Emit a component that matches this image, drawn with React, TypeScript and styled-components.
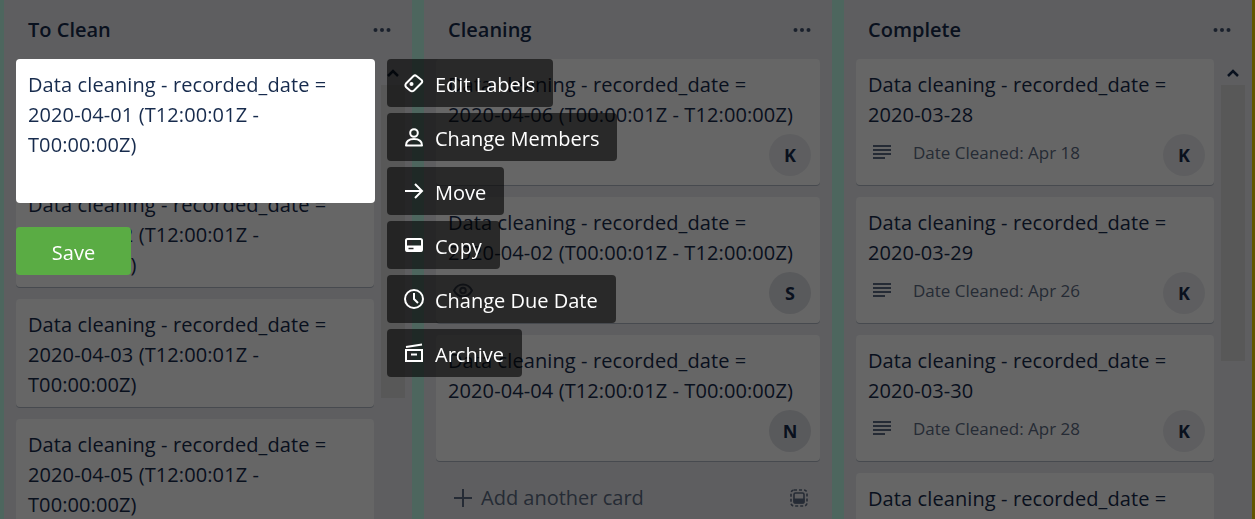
import React from "react";
import styled, { createGlobalStyle } from "styled-components";

const GlobalStyle = createGlobalStyle`
  html, body {
    margin: 0;
    height: 100%;
    overflow: hidden;
    background: #c0ffea;
  }
  body {
    font-family: "Open Sans", "Noto Sans", sans-serif;
    color: #172b4d;
  }
`;

type TCard = {
  date: string;
  range?: string;
  note?: string;
  member?: string;
  strong?: boolean;
  watching?: boolean;
};

const todo: TCard[] = [
  { date: "2020-04-01", range: "(T12:00:01Z - T00:00:00Z)" },
  { date: "2020-04-02", range: "(T12:00:01Z - T00:00:00Z)" },
  { date: "2020-04-03", range: "(T12:00:01Z - T00:00:00Z)" },
  { date: "2020-04-05", range: "(T12:00:01Z - T00:00:00Z)" },
];

const cleaning: TCard[] = [
  { date: "2020-04-06", range: "(T00:00:01Z - T12:00:00Z)", member: "K" },
  { date: "2020-04-02", range: "(T00:00:01Z - T12:00:00Z)", member: "S", strong: true, watching: true },
  { date: "2020-04-04", range: "(T12:00:01Z - T00:00:00Z)", member: "N", strong: true },
];

const complete: TCard[] = [
  { date: "2020-03-28", note: "Date Cleaned: Apr 18", member: "K" },
  { date: "2020-03-29", note: "Date Cleaned: Apr 26", member: "K" },
  { date: "2020-03-30", note: "Date Cleaned: Apr 28", member: "K" },
  { date: "2020-03-31", note: "Date Cleaned: Apr 28", member: "K" },
];

const IconDots = () => (
  <svg width="18" height="6" viewBox="0 0 18 6" fill="currentColor">
    <circle cx="2.5" cy="3" r="2" />
    <circle cx="9" cy="3" r="2" />
    <circle cx="15.5" cy="3" r="2" />
  </svg>
);

const IconLines = () => (
  <svg width="20" height="16" viewBox="0 0 20 16" fill="currentColor">
    <rect x="1" y="1" width="18" height="2" />
    <rect x="1" y="5" width="18" height="2" />
    <rect x="1" y="9" width="18" height="2" />
    <rect x="1" y="13" width="12" height="2" />
  </svg>
);

const IconEye = () => (
  <svg width="20" height="15" viewBox="0 0 20 15" fill="none" stroke="currentColor" strokeWidth="2">
    <path d="M1 7.500C3 3.500 6 1.500 10 1.500S17 3.500 19 7.500C17 11.500 14 13.500 10 13.500S3 11.500 1 7.500Z" />
    <circle cx="10" cy="7.500" r="2.800" />
  </svg>
);

const IconTemplate = () => (
  <svg width="18" height="18" viewBox="0 0 18 18" fill="none" stroke="currentColor" strokeWidth="1.6">
    <path d="M4 1h10a3 3 0 0 1 3 3v10a3 3 0 0 1-3 3H4a3 3 0 0 1-3-3V4a3 3 0 0 1 3-3Z" strokeDasharray="3 2" />
    <rect x="4" y="4" width="10" height="10" rx="1.500" />
    <rect x="3.500" y="9.500" width="11" height="5" rx="1" fill="currentColor" stroke="none" />
  </svg>
);

const IconPlus = () => (
  <svg width="18" height="18" viewBox="0 0 18 18" stroke="currentColor" strokeWidth="2">
    <path d="M9 0v18M0 9h18" />
  </svg>
);

const IconChevron = () => (
  <svg width="12" height="8" viewBox="0 0 12 8" fill="none" stroke="currentColor" strokeWidth="2.500">
    <path d="M1 7l5-5 5 5" />
  </svg>
);

const MenuIcon: React.FC<{ children: React.ReactNode }> = ({ children }) => (
  <svg width="20" height="20" viewBox="0 0 20 20" fill="none" stroke="#fff" strokeWidth="2">
    {children}
  </svg>
);

const CardItem: React.FC<{ card: TCard }> = ({ card }) => (
  <Card>
    <CardTitle>
      Data cleaning - recorded_date = <DateStamp>{card.date}</DateStamp> {card.range}
    </CardTitle>
    {card.member && (
      <CardFooter>
        {card.note && (
          <Note>
            <IconLines />
            <span>{card.note}</span>
          </Note>
        )}
        {card.watching && (
          <WatchIcon>
            <IconEye />
          </WatchIcon>
        )}
        <Avatar $strong={card.strong}>{card.member}</Avatar>
      </CardFooter>
    )}
  </Card>
);

const App: React.FC = () => {
  return (
    <>
      <GlobalStyle />
      <Board>
        <Column>
          <ColumnHeader>
            <ColumnTitle>To Clean</ColumnTitle>
            <IconDots />
          </ColumnHeader>
          <ColumnBody>
            <CardList>
              {todo.map((card) => (
                <CardItem key={card.date} card={card} />
              ))}
            </CardList>
            <ScrollRail>
              <IconChevron />
              <ScrollThumb $height={313} />
            </ScrollRail>
          </ColumnBody>
        </Column>

        <Column>
          <ColumnHeader>
            <ColumnTitle>Cleaning</ColumnTitle>
            <IconDots />
          </ColumnHeader>
          <ColumnBody>
            <CardList $wide>
              {cleaning.map((card) => (
                <CardItem key={card.date} card={card} />
              ))}
              <AddCard>
                <AddLabel>
                  <IconPlus />
                  Add another card
                </AddLabel>
                <IconTemplate />
              </AddCard>
            </CardList>
          </ColumnBody>
        </Column>

        <Column>
          <ColumnHeader>
            <ColumnTitle>Complete</ColumnTitle>
            <IconDots />
          </ColumnHeader>
          <ColumnBody>
            <CardList>
              {complete.map((card) => (
                <CardItem key={card.date} card={card} />
              ))}
            </CardList>
            <ScrollRail>
              <IconChevron />
              <ScrollThumb $height={276} />
            </ScrollRail>
          </ColumnBody>
        </Column>
        <NextColumn />
      </Board>

      <Overlay>
        <EditorSide>
          <Editor>
            Data cleaning - recorded_date = <DateStamp>2020-04-01</DateStamp> (T12:00:01Z - T00:00:00Z)
          </Editor>
          <SaveButton>Save</SaveButton>
        </EditorSide>
        <Menu>
          <MenuItem>
            <MenuIcon>
              <path d="M2 10.500 9.500 3Q11 1.800 12.500 3L17.500 7Q19 8.500 17.500 10L10 17.500Q8 19 6 17.500L2 14Q.8 12.300 2 10.500Z" />
              <circle cx="7.500" cy="11" r="2" fill="#fff" stroke="none" />
            </MenuIcon>
            <MenuLabel>Edit Labels</MenuLabel>
          </MenuItem>
          <MenuItem>
            <MenuIcon>
              <circle cx="10" cy="6" r="3.800" />
              <path d="M2 18.500c0-4 3-6.500 8-6.500s8 2.500 8 6.500Z" strokeLinejoin="round" />
            </MenuIcon>
            <MenuLabel>Change Members</MenuLabel>
          </MenuItem>
          <MenuItem>
            <MenuIcon>
              <path d="M1 10h17M11 3l7 7-7 7" />
            </MenuIcon>
            <MenuLabel>Move</MenuLabel>
          </MenuItem>
          <MenuItem>
            <MenuIcon>
              <rect x="2" y="4" width="16" height="12" rx="1.500" />
              <rect x="2" y="10.500" width="16" height="6" fill="#fff" stroke="none" />
              <path d="M4.500 13.500h5" stroke="#292929" strokeWidth="1.500" />
            </MenuIcon>
            <MenuLabel>Copy</MenuLabel>
          </MenuItem>
          <MenuItem>
            <MenuIcon>
              <circle cx="10" cy="10" r="9" />
              <path d="M10 4v6l4 4" />
            </MenuIcon>
            <MenuLabel>Change Due Date</MenuLabel>
          </MenuItem>
          <MenuItem>
            <MenuIcon>
              <path d="M2 4 18 1.500" />
              <rect x="2" y="7" width="16" height="11" />
              <path d="M7 11.500h6" />
            </MenuIcon>
            <MenuLabel>Archive</MenuLabel>
          </MenuItem>
        </Menu>
      </Overlay>
    </>
  );
};

export default App;

const Board = styled.div`
  display: flex;
  gap: 12px;
  height: 519px;
  padding-left: 4px;
  overflow: hidden;
`;

const Column = styled.section`
  flex: 0 0 408px;
  display: flex;
  flex-direction: column;
  background-color: #ebecf0;
`;

const NextColumn = styled.div`
  flex: 0 0 40px;
  margin-left: -12px;
  background-color: #f2d600;
`;

const ColumnHeader = styled.header`
  flex: 0 0 59px;
  box-sizing: border-box;
  display: flex;
  align-items: center;
  justify-content: space-between;
  padding: 0 21px 0 24px;
  color: #42526e;
`;

const ColumnTitle = styled.h2`
  margin: 0;
  font-size: 20px;
  font-weight: 600;
  color: #172b4d;
`;

const ColumnBody = styled.div`
  flex: 1;
  min-height: 0;
  display: flex;
  padding-left: 12px;
`;

const CardList = styled.div<{ $wide?: boolean }>`
  flex: 0 0 ${({ $wide }) => ($wide ? "384px" : "358px")};
  display: flex;
  flex-direction: column;
  gap: 12px;
`;

const Card = styled.article`
  flex: none;
  padding: 11px 12px 7px;
  border-radius: 4px;
  background-color: #fff;
  box-shadow: 0 1px 0 rgba(9, 30, 66, 0.25);
`;

const CardTitle = styled.div`
  font-size: 20px;
  line-height: 30px;
  letter-spacing: 0.1px;
`;

const DateStamp = styled.span`
  white-space: nowrap;
`;

const CardFooter = styled.div`
  display: flex;
  align-items: center;
  justify-content: flex-end;
  height: 42px;
  margin: 4px 0 2px;
`;

const Note = styled.div`
  flex: 1;
  display: flex;
  align-items: center;
  gap: 21px;
  padding: 0 0 6px 4px;
  font-size: 17px;
  color: #5e6c84;
`;

const WatchIcon = styled.div`
  flex: 1;
  display: flex;
  align-items: center;
  padding: 0 0 6px 5px;
  color: #5e6c84;
`;

const Avatar = styled.div<{ $strong?: boolean }>`
  flex: none;
  width: 42px;
  height: 42px;
  margin-right: -3px;
  border-radius: 50%;
  display: flex;
  align-items: center;
  justify-content: center;
  font-size: 18px;
  font-weight: 700;
  background-color: ${({ $strong }) => ($strong ? "#dfe1e6" : "#ebecf0")};
`;

const ScrollRail = styled.div`
  flex: 0 0 24px;
  margin-left: 7px;
  padding-top: 10px;
  display: flex;
  flex-direction: column;
  align-items: center;
  gap: 8px;
  color: #172b4d;
`;

const ScrollThumb = styled.div<{ $height: number }>`
  align-self: stretch;
  height: ${({ $height }) => $height}px;
  background-color: #dcdcdc;
`;

const AddCard = styled.div`
  display: flex;
  align-items: center;
  justify-content: space-between;
  padding: 11px 12px 0 18px;
  color: #5e6c84;
`;

const AddLabel = styled.div`
  display: flex;
  align-items: center;
  gap: 9px;
  font-size: 20px;
`;

const Overlay = styled.div`
  position: fixed;
  inset: 0;
  display: flex;
  gap: 12px;
  padding: 59px 0 0 16px;
  background-color: rgba(0, 0, 0, 0.6);
`;

const EditorSide = styled.div`
  flex: 0 0 359px;
  display: flex;
  flex-direction: column;
  align-items: flex-start;
  gap: 24px;
`;

const Editor = styled.div`
  box-sizing: border-box;
  width: 100%;
  height: 144px;
  padding: 11px 12px;
  border-radius: 4px;
  background-color: #fff;
  font-size: 20px;
  line-height: 30px;
  letter-spacing: 0.1px;
`;

const SaveButton = styled.button`
  width: 115px;
  height: 48px;
  padding: 2px 0 0;
  border: none;
  border-radius: 4px;
  background-color: #5aac44;
  color: #fff;
  font: inherit;
  font-size: 20px;
`;

const Menu = styled.nav`
  display: flex;
  flex-direction: column;
  align-items: flex-start;
  gap: 6px;
`;

const MenuItem = styled.button`
  height: 48px;
  display: flex;
  align-items: center;
  gap: 11px;
  padding: 0 18px 0 17px;
  border: none;
  border-radius: 4px;
  background-color: rgba(0, 0, 0, 0.6);
  color: #fff;
  font: inherit;
  font-size: 20px;
`;

const MenuLabel = styled.span`
  padding-top: 2px;
`;
